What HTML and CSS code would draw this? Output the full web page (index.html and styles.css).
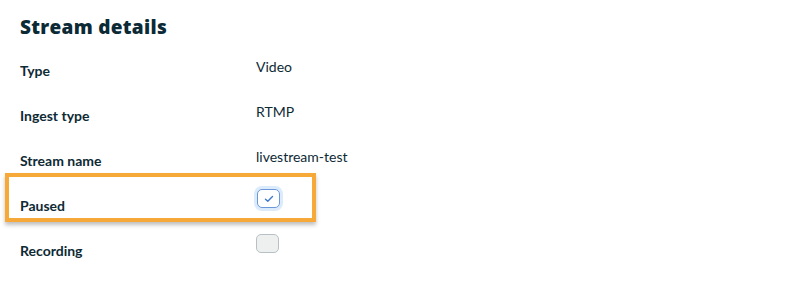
FILE: index.html
```html
<!DOCTYPE html>
<html>
<head>
  <title>Stream details</title>
  <link rel="stylesheet" href="styles.css">
</head>
<body>
  <!-- Stream details panel -->
  <section class="details">
    <h2 class="details-title">Stream details</h2>

    <div class="row">
      <span class="row-label">Type</span>
      <span class="row-value">Video</span>
    </div>
    <div class="row">
      <span class="row-label">Ingest type</span>
      <span class="row-value">RTMP</span>
    </div>
    <div class="row">
      <span class="row-label">Stream name</span>
      <span class="row-value">livestream-test</span>
    </div>
    <div class="row row-highlight">
      <span class="row-label">Paused</span>
      <span class="row-check"><span class="check check-on">
        <svg width="10" height="8" viewBox="0 0 10 8"><path d="M1.5 4.2 L3.8 6.2 L8.5 1.6" fill="none" stroke="#3f78c9" stroke-width="1.4" stroke-linecap="round" stroke-linejoin="round"/></svg>
      </span></span>
    </div>
    <div class="row">
      <span class="row-label">Recording</span>
      <span class="row-check"><span class="check"></span></span>
    </div>
  </section>
</body>
</html>
```

FILE: styles.css
```css
/* Page base */
body {
  margin: 0;
  background: #fff;
  color: #0e2a35;
  font-family: Lato, "Open Sans", sans-serif;
}

/* Panel */
.details {
  padding: 15px 20px 0 20px;
}

.details-title {
  margin: 0 0 10px 0;
  font-family: "Open Sans", sans-serif;
  font-weight: 800;
  font-size: 19px;
  line-height: 24px;
  letter-spacing: 0.3px;
  color: #0b2a35;
}

/* Rows */
.row {
  display: grid;
  grid-template-columns: 236px 1fr;
  align-items: start;
  height: 45px;
  font-size: 14px;
  line-height: 20px;
}

.row-label {
  padding-top: 12px;
  font-weight: 700;
}

.row-value {
  padding-top: 8px;
}

.row-check {
  padding-top: 5px;
}

/* Highlighted row */
.row-highlight {
  box-sizing: border-box;
  width: 311px;
  height: 49px;
  margin: -11px 0 7px -15px;
  padding-left: 11px;
  grid-template-columns: 236px 1fr;
  border: 4px solid #f6a938;
  box-shadow: 0 3px 4px rgba(0, 0, 0, 0.25);
  position: relative;
}

.row-highlight .row-label {
  padding-top: 19px;
}

.row-highlight .row-check {
  padding-top: 12px;
  margin-left: 1px;
}

/* Checkbox */
.check {
  display: flex;
  align-items: center;
  justify-content: center;
  box-sizing: border-box;
  width: 23px;
  height: 19px;
  border: 1px solid #b7c1c5;
  border-radius: 5px;
  background: #eef0ef;
}

.check-on {
  border-color: #6b98d8;
  background: #fff;
  box-shadow: 0 0 0 3px #dcebfc;
}
```
